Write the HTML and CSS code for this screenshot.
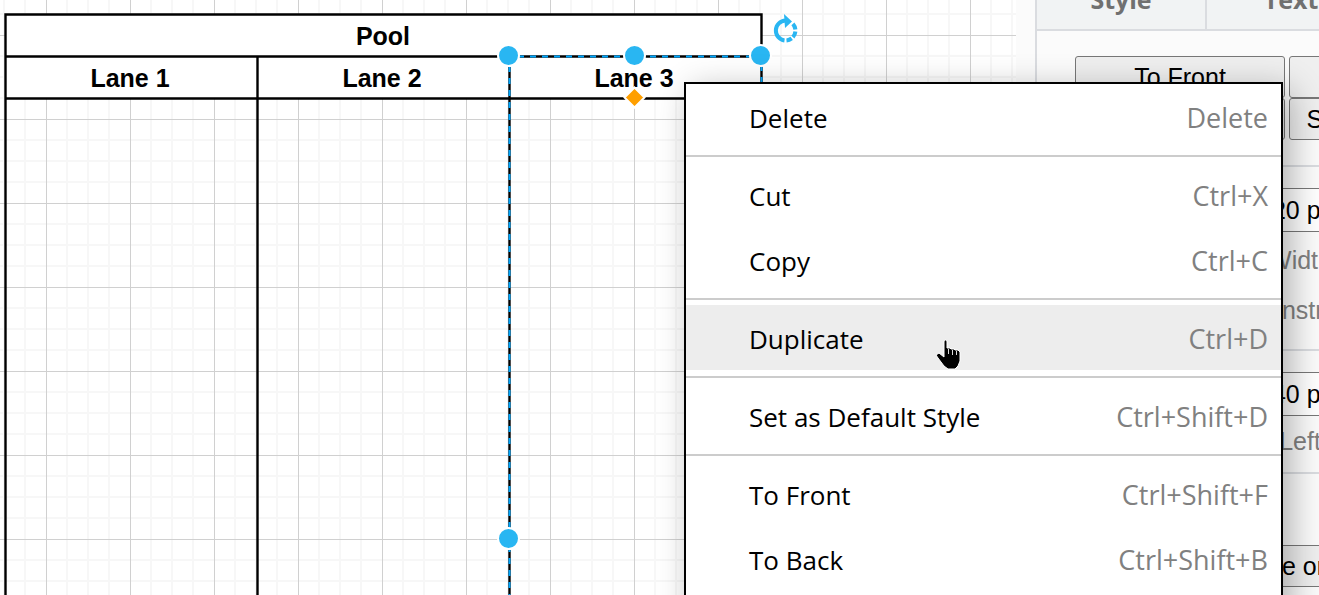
FILE: index.html
```html
<!DOCTYPE html>
<html lang="en">
<head>
<meta charset="utf-8">
<title>Diagram editor</title>
<link rel="stylesheet" href="styles.css">
</head>
<body>
<main class="editor">
  <section class="canvas" aria-label="Canvas">
    <svg class="diagram" xmlns="http://www.w3.org/2000/svg">
      <defs>
        <pattern id="grid" x="46" y="35" width="84" height="84" patternUnits="userSpaceOnUse">
          <path d="M21 0V84M42 0V84M63 0V84M0 21H84M0 42H84M0 63H84" stroke="#f7f7f7" stroke-width="2"/>
          <path d="M.5 0V84M0 .5H84" stroke="#d0d0d0"/>
        </pattern>
      </defs>
      <rect width="100%" height="100%" fill="url(#grid)"/>
      <rect x="5" y="14" width="757" height="84" fill="#fff"/>
      <g fill="none" stroke="#000" stroke-width="2.4">
        <path d="M5.500 900V14.500H761.500V900M5 56.500H762M5 98.500H762M257.500 56V900M509.500 56V900"/>
      </g>
      <g class="lane-title">
        <text x="383" y="45">Pool</text>
        <text x="130" y="87">Lane 1</text>
        <text x="382" y="87">Lane 2</text>
        <text x="634" y="87">Lane 3</text>
      </g>
      <path d="M509.500 900V56.500H761.500V900" fill="none" stroke="#00a8ff" stroke-width="2" stroke-dasharray="6 6"/>
      <g fill="#29b6f2" stroke="#fff" stroke-width="2">
        <circle cx="508.500" cy="55.500" r="10.500"/>
        <circle cx="634.500" cy="55.500" r="10.500"/>
        <circle cx="760.500" cy="55.500" r="10.500"/>
        <circle cx="508.500" cy="538.500" r="10.500"/>
      </g>
      <path d="M634.500 87.500L644.500 97.500L634.500 107.500L624.500 97.500Z" fill="#ff9f00" stroke="#fff" stroke-width="2"/>
      <g fill="none" stroke="#29b6f2" stroke-width="4">
        <path d="M785.500 20.500A10 10 0 0 0 784.500 40.400"/>
        <path d="M786.500 40.400A10 10 0 0 0 791.700 38.400M792.900 37.200A10 10 0 0 0 795.400 31.500M795.400 29.500A10 10 0 0 0 792.900 23.800"/>
      </g>
      <path d="M784 14L792 21.500L785 28Z" fill="#29b6f2"/>
    </svg>
  </section>
  <aside class="sidebar">
    <div class="sheet">
      <div class="tabs">
        <button class="tab">Style</button>
        <button class="tab">Text</button>
        <button class="tab">Arrange</button>
      </div>
      <section class="group order">
        <button class="btn">To Front</button>
        <button class="btn">To Back</button>
        <button class="btn">Bring Forward</button>
        <button class="btn">Send Backward</button>
      </section>
      <section class="group size">
        <label class="field"><input type="text" value="420 pt"><span>Width</span></label>
        <label class="check"><input type="checkbox"><span>Constrain Proportions</span></label>
      </section>
      <section class="group position">
        <label class="field"><input type="text" value="240 pt"><span>Left</span></label>
      </section>
      <section class="group turn">
        <button class="btn">Rotate shape only by 90°</button>
      </section>
    </div>
  </aside>
</main>
<nav class="menu" aria-label="Context menu">
  <button class="item"><span>Delete</span><kbd>Delete</kbd></button>
  <hr>
  <button class="item"><span>Cut</span><kbd>Ctrl+X</kbd></button>
  <button class="item"><span>Copy</span><kbd>Ctrl+C</kbd></button>
  <hr>
  <button class="item active"><span>Duplicate</span><kbd>Ctrl+D</kbd></button>
  <hr>
  <button class="item"><span>Set as Default Style</span><kbd>Ctrl+Shift+D</kbd></button>
  <hr>
  <button class="item"><span>To Front</span><kbd>Ctrl+Shift+F</kbd></button>
  <button class="item"><span>To Back</span><kbd>Ctrl+Shift+B</kbd></button>
</nav>
<svg class="cursor" width="28" height="34" viewBox="0 0 28 34" aria-hidden="true">
  <path d="M8 3Q9.500 1 11 3V10H14L15 11H18L19 12H22L24 14V23L22 28L19 31H12L8 28L2 20L0 17L3 15L8 19Z" fill="#000" stroke="#fff" stroke-width="1"/>
  <path d="M12.500 11V16M16.500 12V17M20.500 13V17" stroke="#ddd"/>
</svg>
</body>
</html>
```
FILE: styles.css
```css
* {
  box-sizing: border-box;
}

body {
  margin: 0;
  height: 100vh;
  overflow: hidden;
  position: relative;
  background: #fbfbfb;
  font-family: "Open Sans", "Noto Sans", sans-serif;
}

button,
input,
kbd {
  font: inherit;
  color: inherit;
}

.editor {
  display: flex;
  gap: 19px;
  height: 100%;
}

.canvas {
  flex: 1;
  min-width: 0;
  background: #fff;
}

.diagram {
  display: block;
  width: 100%;
  height: 100%;
}

.lane-title {
  font: bold 25px "Liberation Sans", Arial, sans-serif;
  text-anchor: middle;
}

.sidebar {
  flex: 0 0 284px;
  overflow: hidden;
  border-left: 2px solid #dadce0;
}

.sheet {
  width: 510px;
  font-family: "Liberation Sans", Arial, sans-serif;
  font-size: 25px;
}

.tabs {
  display: grid;
  grid-template-columns: repeat(3, 1fr);
  height: 62px;
  margin-top: -31px;
  border-bottom: 2px solid #dadce0;
  background: #f1f3f4;
}

.tab {
  border: 0;
  border-right: 2px solid #dadce0;
  padding: 0;
  background: none;
  color: #707070;
  font: bold 25px "Open Sans", sans-serif;
}

.group {
  padding: 21px 38px;
  border-bottom: 2px solid #dadce0;
}

.order {
  display: grid;
  grid-template-columns: 210px 210px;
  column-gap: 4px;
  padding: 25px 38px;
}

.btn {
  height: 42px;
  padding: 0;
  border: 1px solid #777;
  border-radius: 3px;
  background: #efefef;
  color: #000;
  white-space: nowrap;
}

.size {
  height: 184px;
}

.position {
  height: 123px;
}

.turn {
  padding-top: 71px;
}

.turn .btn {
  width: 424px;
}

.field {
  display: flex;
  flex-direction: column;
  align-items: center;
  gap: 12px;
  width: 116px;
  margin-left: 167px;
  color: #808080;
  line-height: 32px;
}

.position .field {
  gap: 9px;
}

.field input {
  width: 116px;
  height: 44px;
  padding: 0 15px;
  border: 1px solid #777;
  background: #fff;
  color: #000;
}

.check {
  display: flex;
  align-items: center;
  gap: 8px;
  margin: 18px 0 0 147px;
  color: #808080;
  line-height: 32px;
  white-space: nowrap;
}

.menu {
  position: absolute;
  top: 82px;
  left: 684px;
  width: 599px;
  padding-bottom: 24px;
  border: 2px solid #000;
  background: #fff;
  box-shadow: 8px 8px 32px rgba(0, 0, 0, 0.3);
}

.menu hr {
  height: 2px;
  margin: 6px 0 5px;
  border: 0;
  background: #ccc;
}

.item {
  display: flex;
  justify-content: space-between;
  align-items: center;
  width: 100%;
  height: 65px;
  padding: 2px 13px 0 63px;
  border: 0;
  background: none;
  color: #000;
  font-size: 26px;
}

.item kbd {
  color: #808080;
  font-size: 27px;
}

.active {
  background: #ededed;
}

.cursor {
  position: absolute;
  top: 338px;
  left: 936px;
}
```
